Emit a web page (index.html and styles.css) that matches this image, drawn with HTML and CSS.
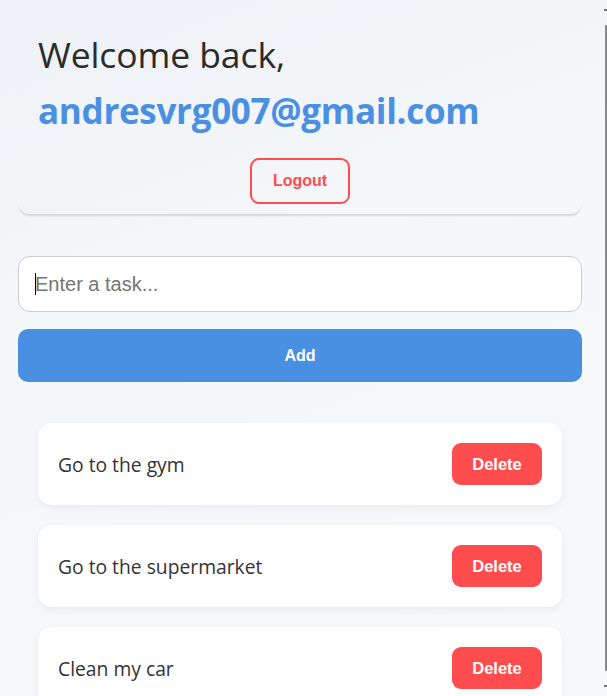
FILE: index.html
```html
<!DOCTYPE html>
<html lang="en">
<head>
<meta charset="utf-8">
<title>Todo</title>
<link rel="stylesheet" href="styles.css">
</head>
<body>
<div class="page">
  <header class="welcome-card">
    <h1 class="welcome-title">Welcome back,</h1>
    <h2 class="welcome-email">andresvrg007@gmail.com</h2>
    <div class="logout-row"><button class="btn-logout">Logout</button></div>
  </header>

  <form class="task-form">
    <div class="input-wrap">
      <span class="caret"></span>
      <input class="task-input" type="text" placeholder="Enter a task...">
    </div>
    <button class="btn-add" type="button">Add</button>
  </form>

  <ul class="task-list">
    <li class="task-item"><span class="task-text">Go to the gym</span><button class="btn-delete">Delete</button></li>
    <li class="task-item"><span class="task-text">Go to the supermarket</span><button class="btn-delete">Delete</button></li>
    <li class="task-item"><span class="task-text">Clean my car</span><button class="btn-delete">Delete</button></li>
  </ul>
</div>
<div class="scrollbar"><span class="arrow-up"></span><span class="thumb"></span><span class="arrow-down"></span></div>
</body>
</html>
```

FILE: styles.css
```css
html, body {
  margin: 0;
  padding: 0;
  height: 100%;
  overflow: hidden;
}
body {
  background: linear-gradient(160deg, #eef1f5 0%, #f5f7fa 40%, #f8f9fb 100%);
  font-family: "Open Sans", "Noto Sans", sans-serif;
  color: #333;
}
.page {
  padding: 0 25px 0 18px;
}
.welcome-card {
  border-radius: 0 0 12px 12px;
  box-shadow: 0 3px 2px -1px rgba(0, 0, 0, 0.13);
  padding: 28px 20px 10px;
}
.welcome-title {
  margin: 0;
  font-size: 35.5px;
  font-weight: 500;
  line-height: 52px;
  color: #2b2b2b;
  letter-spacing: -0.1px;
}
.welcome-email {
  margin: 0;
  font-size: 35px;
  font-weight: 700;
  line-height: 62px;
  color: #4a90e2;
  letter-spacing: -0.3px;
}
.logout-row {
  display: flex;
  justify-content: center;
  padding-top: 16px;
}
.btn-logout {
  width: 100px;
  height: 46px;
  border: 2px solid #ff4d4f;
  border-radius: 9px;
  background: transparent;
  color: #ff4d4f;
  font-family: "Liberation Sans", Arial, sans-serif;
  font-weight: 700;
  font-size: 16px;
}
.task-form {
  display: flex;
  flex-direction: column;
  gap: 17px;
  margin-top: 42px;
}
.input-wrap {
  position: relative;
}
.task-input {
  box-sizing: border-box;
  width: 100%;
  height: 56px;
  border: 1px solid #cccccc;
  border-radius: 12px;
  background: #fff;
  padding: 0 16px;
  font-family: "Liberation Sans", Arial, sans-serif;
  font-size: 20px;
  color: #333;
  outline: none;
}
.task-input::placeholder {
  color: #757575;
}
.caret {
  position: absolute;
  left: 17px;
  top: 17px;
  width: 1px;
  height: 22px;
  background: #000;
}
.btn-add {
  height: 53px;
  border: none;
  border-radius: 10px;
  background: #4a90e2;
  color: #fff;
  font-family: "Liberation Sans", Arial, sans-serif;
  font-weight: 700;
  font-size: 16px;
}
.task-list {
  list-style: none;
  margin: 41px 0 0;
  padding: 0 20px;
  display: flex;
  flex-direction: column;
  gap: 20px;
}
.task-item {
  display: flex;
  align-items: center;
  justify-content: space-between;
  background: #fff;
  border-radius: 14px;
  padding: 20px;
  box-shadow: 0 3px 10px rgba(0, 0, 0, 0.06);
}
.task-text {
  font-size: 19.3px;
  color: #333;
}
.btn-delete {
  width: 90px;
  height: 42px;
  border: none;
  border-radius: 9px;
  background: #ff4d4f;
  color: #fff;
  font-family: "Liberation Sans", Arial, sans-serif;
  font-weight: 700;
  font-size: 16.5px;
}
.scrollbar {
  position: fixed;
  top: 0;
  right: 0;
  bottom: 0;
  width: 3px;
  display: flex;
  flex-direction: column;
  align-items: flex-end;
}
.arrow-up, .arrow-down {
  width: 3px;
  height: 2px;
  background: #777;
  margin: 9px 0;
}
.thumb {
  flex: 1;
  width: 2px;
  background: #8a8a8a;
  margin: 5px 0;
}
```
